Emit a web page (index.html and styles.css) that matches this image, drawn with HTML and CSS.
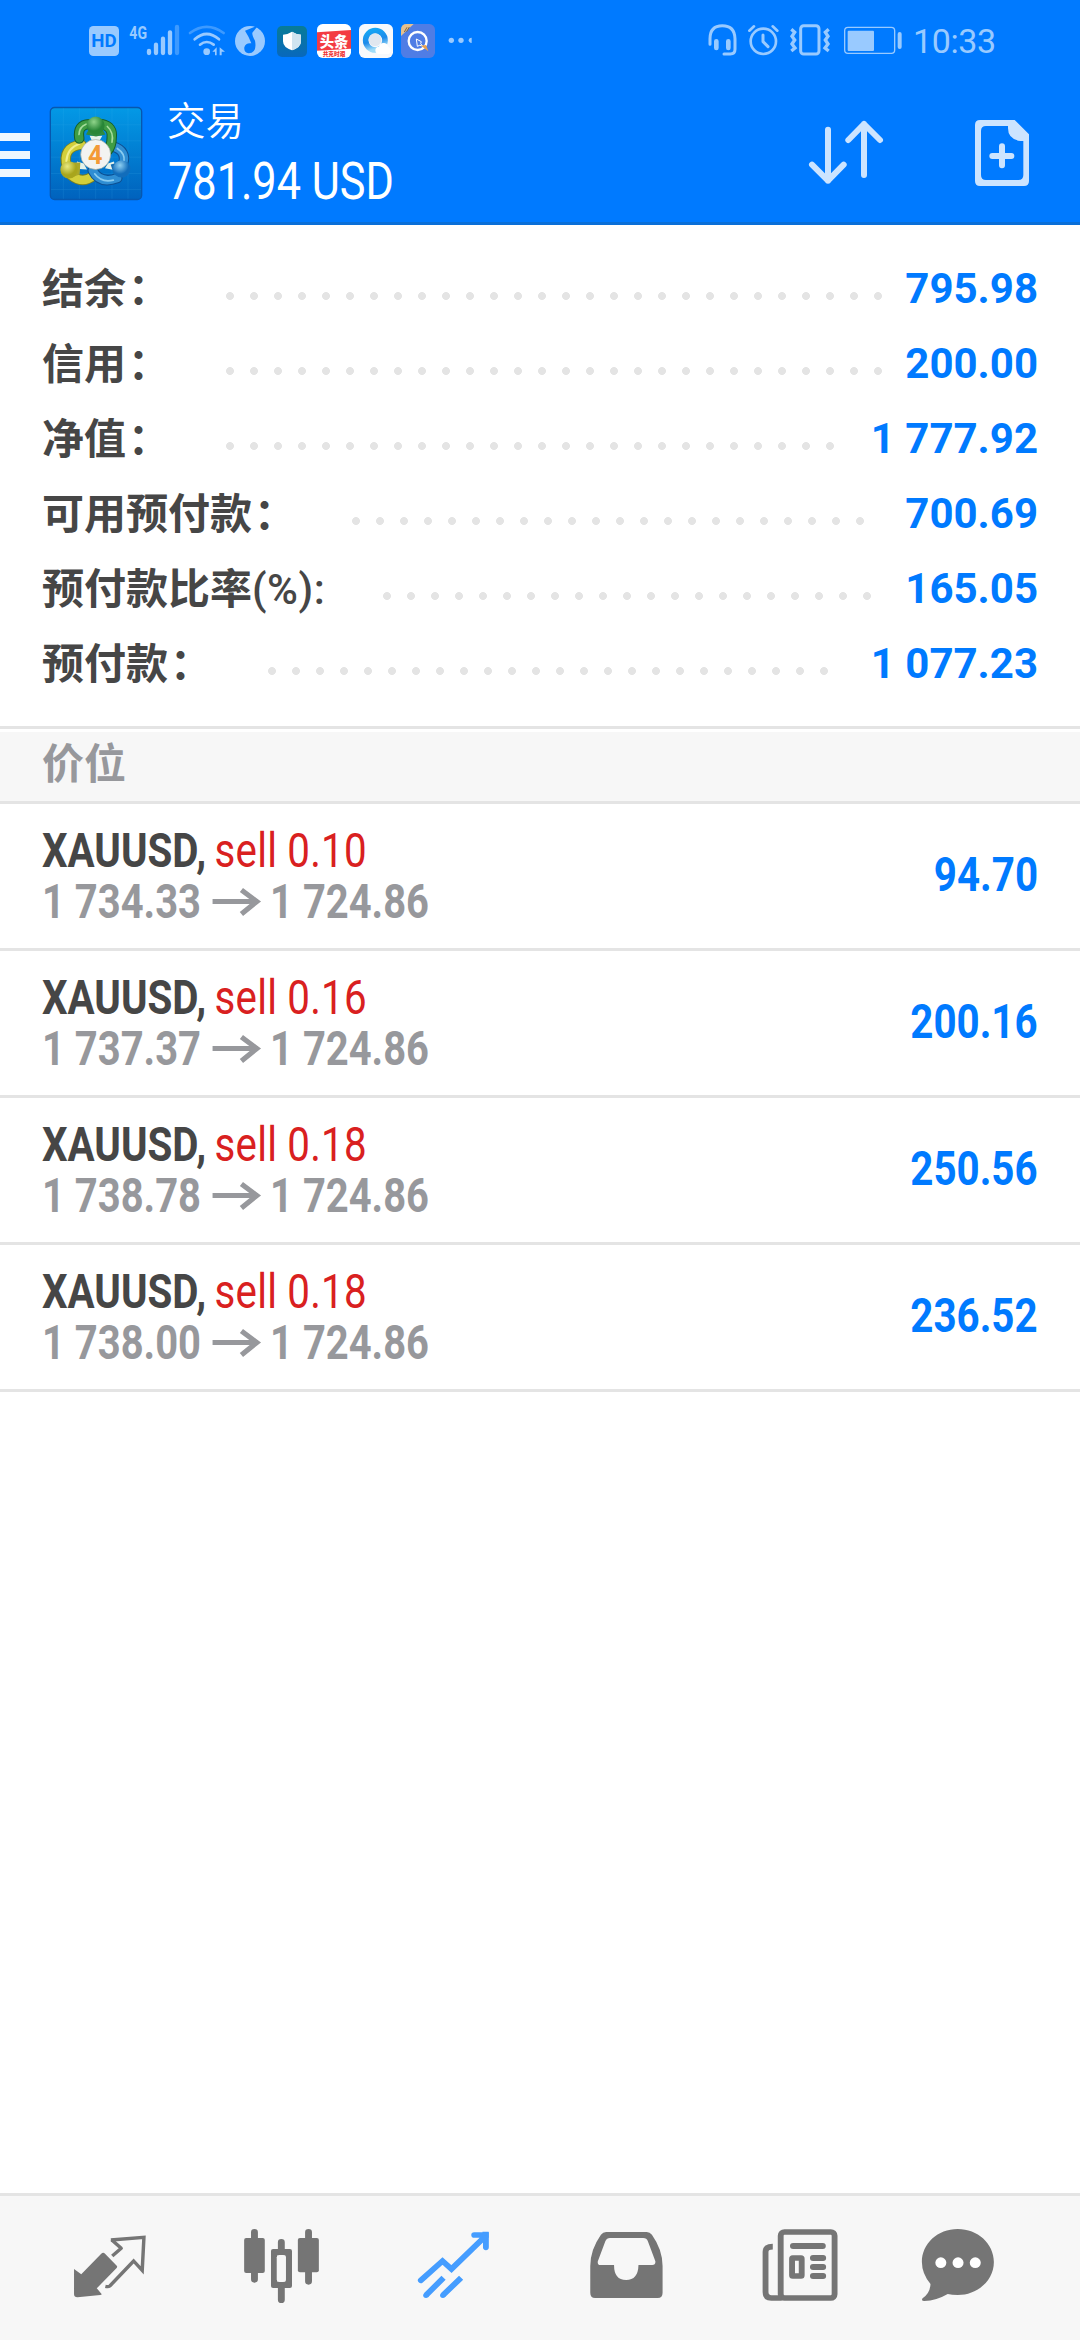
FILE: index.html
```html
<!DOCTYPE html>
<html lang="zh-CN">
<head>
<meta charset="utf-8">
<title>交易</title>
<link rel="stylesheet" href="styles.css">
</head>
<body>
<header class="header">
  <div class="status">
    <svg class="ic hd" viewBox="267 66 90 108"><rect x="267" y="78" width="90" height="90" rx="13" fill="#99caff"/><text x="312" y="142" text-anchor="middle" textLength="76" lengthAdjust="spacingAndGlyphs" class="hdtext">HD</text></svg>
    <svg class="ic signal" viewBox="387 66 150 108"><text x="388" y="116" textLength="53" lengthAdjust="spacingAndGlyphs" class="g4">4G</text><g stroke="#99caff" stroke-width="13" stroke-linecap="round"><path d="M447 153v6M468 134v25M489 116v43M510 97v62"/><path d="M531 81v78" opacity=".4"/></g></svg>
    <svg class="ic wifi" viewBox="564 66 114 108"><g fill="none" stroke="#99caff" stroke-width="8" stroke-linecap="round"><path d="M570 99Q620 62 671 99" opacity=".4"/><path d="M584 118Q620 86 657 118M600 134Q620 118 641 134"/></g><circle cx="620" cy="155" r="10" fill="#99caff"/><path d="M637 155l13-13v24h-5v-11zM659 166v-24l16 13h-10v11z" fill="#99caff"/></svg>
    <svg class="ic music" viewBox="705 66 90 108"><circle cx="750" cy="123" r="45" fill="#99caff"/><path d="M735 92L775 76Q762 92 757 98Q756 106 765 122Q772 158 746 160Q731 157 733 142Q737 128 754 130Q748 112 735 92Z" fill="#007aff"/></svg>
    <svg class="ic shield" viewBox="831 66 90 108"><defs><linearGradient id="sh" x2="0" y2="1"><stop stop-color="#087c96"/><stop offset="1" stop-color="#0868bd"/></linearGradient></defs><rect x="831" y="78" width="90" height="93" rx="15" fill="url(#sh)"/><path d="M876 95q14 9 27 9v20q0 18-27 27q-27-9-27-27v-20q13 0 27-9" fill="#fff"/><path d="M876 95q14 9 27 9v20q0 18-27 27z" fill="#cfe4f0"/></svg>
    <svg class="ic news1" viewBox="951 66 102 108"><rect x="951" y="72" width="102" height="102" rx="17" fill="#fff"/><path d="M951 97l102-7v56l-102 6z" fill="#f33b42"/><text x="1002" y="140" text-anchor="middle" class="tt">头条</text><text x="1002" y="167" text-anchor="middle" class="ts">共克时艰</text></svg>
    <svg class="ic qq" viewBox="1077 66 102 108"><defs><linearGradient id="qg" x2=".3" y2="1"><stop stop-color="#15a8f5"/><stop offset=".6" stop-color="#1d8bea"/><stop offset="1" stop-color="#9fdcf8"/></linearGradient></defs><rect x="1077" y="72" width="102" height="102" rx="17" fill="#f7f9fc"/><circle cx="1126" cy="121" r="29" fill="none" stroke="url(#qg)" stroke-width="17"/><circle cx="1125" cy="119" r="19" fill="#e1e7ef"/><path d="M1138 162q-12 0-12-11q0-10 11-11q3-13 16-11q10 2 12 12q8 2 7 11q-1 10-10 10z" fill="#fff"/></svg>
    <svg class="ic tool" viewBox="1203 66 102 108"><rect x="1203" y="72" width="102" height="102" rx="17" fill="#4f7de5"/><path d="M1203 108V89q0-17 17-17h21z" fill="#e6c18e"/><path d="M1213 96l8-14m-1 13l8-14" stroke="#80643f" stroke-width="3"/><circle cx="1253" cy="123" r="27" fill="none" stroke="#fff" stroke-width="7"/><path d="M1249 117l15 8-2 6 6 7-9-2-7 3z" fill="#4f7de5" stroke="#fff" stroke-width="3"/><path d="M1263 137l15-2 7 19z" fill="#eba34e"/></svg>
    <svg class="ic more" viewBox="1345 66 75 108"><g fill="#99caff"><circle cx="1355" cy="121" r="8"/><circle cx="1384" cy="121" r="8"/><path d="M1416 113v16q-9-1-9-8t9-8"/></g></svg>
    <svg class="ic phones" viewBox="84 66 87 108"><g fill="none" stroke="#99caff" stroke-width="9" stroke-linecap="round"><path d="M90 133V116Q90 77 127 77T165 116V148Q165 162 151 162H132"/></g><path d="M109 124v20M145 124v20" stroke="#99caff" stroke-width="14" stroke-linecap="round"/></svg>
    <svg class="ic alarm" viewBox="203 66 93 108"><g fill="none" stroke="#99caff" stroke-width="8" stroke-linecap="round" stroke-linejoin="round"><circle cx="249" cy="124" r="38"/><path d="M207 92l14-13M291 92l-14-13"/><path d="M248 105v20l15 15" stroke-width="9"/></g></svg>
    <svg class="ic vibrate" viewBox="329 66 120 108"><g fill="none" stroke="#99caff" stroke-width="9"><rect x="361" y="77" width="55" height="85" rx="9"/><path d="M333 88l10 9-8 12 8 11-8 12 9 12-11 9M445 88l-10 9 8 12-8 11 8 12-9 12 11 9" stroke-width="10"/></g></svg>
    <svg class="ic battery" viewBox="492 66 174 108"><rect x="494" y="82" width="150" height="78" rx="10" fill="none" stroke="#99caff" stroke-width="4"/><rect x="503" y="92" width="79" height="61" rx="3" fill="#99caff"/><rect x="653" y="96" width="12" height="51" rx="6" fill="#99caff"/></svg>
    <span class="time">10:33</span>
  </div>
  <div class="bar">
    <svg class="menu" viewBox="0 0 30 44"><path d="M0 4h30M0 22h30M0 40h30" stroke="#eef7ff" stroke-width="8"/></svg>
    <svg class="logo" viewBox="147 317 282 284">
      <defs>
        <linearGradient id="bg" x2="0" y2="1"><stop stop-color="#0399e6"/><stop offset="1" stop-color="#0062bd"/></linearGradient>
        <radialGradient id="gg" cx=".4" cy=".3"><stop stop-color="#8fd48a"/><stop offset="1" stop-color="#288637"/></radialGradient>
        <radialGradient id="yg" cx=".4" cy=".3"><stop stop-color="#e9ea80"/><stop offset="1" stop-color="#a8a51c"/></radialGradient>
        <radialGradient id="bl" cx=".4" cy=".3"><stop stop-color="#8fd0f2"/><stop offset="1" stop-color="#126dbb"/></radialGradient>
      </defs>
      <rect x="151" y="321" width="274" height="276" rx="13" fill="url(#bg)" stroke="#0757ae" stroke-width="4"/>
      <path d="M190 323v272M238 323v272M287 323v272M336 323v272M384 323v272M153 373h270M153 421h270M153 470h270M153 519h270M153 567h270" stroke="#4cbcf1" stroke-width="1.5" opacity=".25"/>
      <g fill="none" stroke-linecap="round">
        <path d="M201 500Q184 440 244 432M213 524Q248 552 280 526" stroke="#7c8120" stroke-width="31"/><path d="M201 500Q184 440 244 432M213 524Q248 552 280 526" stroke="#d3cf3b" stroke-width="25"/><path d="M199 482Q202 442 238 430" stroke="#f0ee8e" stroke-width="6"/>
        <path d="M278 510Q300 552 352 533M340 438Q382 452 369 490" stroke="#0d4f91" stroke-width="31"/><path d="M278 510Q300 552 352 533M340 438Q382 452 369 490" stroke="#2f8ed3" stroke-width="25"/><path d="M284 520Q305 548 340 539M352 444Q376 460 372 482" stroke="#8accf0" stroke-width="5"/>
        <path d="M238 414Q231 372 268 371M305 371Q340 378 335 413Q335 436 322 452" stroke="#155f2b" stroke-width="31"/><path d="M238 414Q231 372 268 371M305 371Q340 378 335 413Q335 436 322 452" stroke="#3f9d44" stroke-width="25"/><path d="M237 402Q238 378 258 371M322 378Q342 396 336 425" stroke="#a5dc9a" stroke-width="5"/>
      </g>
      <path d="M269 406h38l-10 18h-20zM231 483l20 6 10 18-34-2zM342 483l-18 6-9 14 32 6z" fill="#e4f2eb"/>
      <path d="M258 402l16-29h26l16 29-28 6z" fill="#2f8a3f"/><circle cx="287" cy="375" r="27" fill="url(#gg)"/>
      <path d="M214 486l27 0-2 36-34 12z" fill="#aaa728"/><circle cx="207" cy="508" r="26" fill="url(#yg)"/>
      <path d="M356 486l-24 6 10 31 30 8z" fill="#176db1"/><circle cx="365" cy="505" r="26" fill="url(#bl)"/>
      <circle cx="287" cy="462" r="45" fill="#f3f3f1" stroke="#9aa79d" stroke-width="2"/>
      <text x="286" y="489" text-anchor="middle" class="four">4</text>
    </svg>
    <div class="title"><div class="t1">交易</div><div class="t2">781.94 USD</div></div>
    <svg class="sort" viewBox="387 360 222 195"><g fill="none" stroke="#cce4ff" stroke-width="18" stroke-linecap="round" stroke-linejoin="round"><path d="M444 389v153M396 494l48 48 47-48M552 525V372M505 420l47-48 48 48"/></g></svg>
    <svg class="add" viewBox="885 357 165 204"><path fill-rule="evenodd" fill="#cce4ff" d="M900 360h104l43 43v140q0 15-15 15H900q-15 0-15-15V375q0-15 15-15zM918 378q-15 0-15 15v132q0 15 15 15h97q15 0 15-15V423h-8q-38-5-38-38v-7z"/><path d="M937 468h57M966 439v57" stroke="#cce4ff" stroke-width="18" stroke-linecap="round"/></svg>
  </div>
</header>

<section class="summary">
  <div class="row"><span class="label">结余<i class="colon">：</i></span><span class="dots" style="--n:28"></span><b class="value">795.98</b></div>
  <div class="row"><span class="label">信用<i class="colon">：</i></span><span class="dots" style="--n:28"></span><b class="value">200.00</b></div>
  <div class="row"><span class="label">净值<i class="colon">：</i></span><span class="dots" style="--n:26"></span><b class="value">1 777.92</b></div>
  <div class="row"><span class="label">可用预付款<i class="colon">：</i></span><span class="dots" style="--n:22"></span><b class="value">700.69</b></div>
  <div class="row"><span class="label">预付款比率<span class="latin">(%):</span></span><span class="dots" style="--n:21"></span><b class="value">165.05</b></div>
  <div class="row"><span class="label">预付款<i class="colon">：</i></span><span class="dots" style="--n:24"></span><b class="value">1 077.23</b></div>
</section>

<h2 class="section">价位</h2>

<main class="list">
  <div class="pos"><div class="info"><div class="name"><b>XAUUSD,</b> <span class="side">sell 0.10</span></div><div class="price"><span class="num">1 734.33</span><svg class="arrow" viewBox="0 0 46 26" preserveAspectRatio="none"><path d="M0 12.5H42M28 1L43 12.5L28 25" /></svg><span class="num">1 724.86</span></div></div><b class="profit">94.70</b></div>
  <div class="pos"><div class="info"><div class="name"><b>XAUUSD,</b> <span class="side">sell 0.16</span></div><div class="price"><span class="num">1 737.37</span><svg class="arrow" viewBox="0 0 46 26" preserveAspectRatio="none"><path d="M0 12.5H42M28 1L43 12.5L28 25" /></svg><span class="num">1 724.86</span></div></div><b class="profit">200.16</b></div>
  <div class="pos"><div class="info"><div class="name"><b>XAUUSD,</b> <span class="side">sell 0.18</span></div><div class="price"><span class="num">1 738.78</span><svg class="arrow" viewBox="0 0 46 26" preserveAspectRatio="none"><path d="M0 12.5H42M28 1L43 12.5L28 25" /></svg><span class="num">1 724.86</span></div></div><b class="profit">250.56</b></div>
  <div class="pos"><div class="info"><div class="name"><b>XAUUSD,</b> <span class="side">sell 0.18</span></div><div class="price"><span class="num">1 738.00</span><svg class="arrow" viewBox="0 0 46 26" preserveAspectRatio="none"><path d="M0 12.5H42M28 1L43 12.5L28 25" /></svg><span class="num">1 724.86</span></div></div><b class="profit">236.52</b></div>
</main>

<nav class="nav">
  <svg viewBox="209.1 132 220.7 252" preserveAspectRatio="none"><path fill="#757575" d="M215 267l21 16 58-62q6-5 11 0l34 36q3 4-1 8l-57 60 14 17q1 3-4 3l-66 7q-10 0-10-9z"/><path fill="none" stroke="#757575" stroke-width="10" stroke-linejoin="round" d="M326 228l26-23-28-26"/><path fill="none" stroke="#757575" stroke-width="10" d="M322 180l96-8-5 99-25-28-69 75q-4 3-13 1"/></svg>
  <svg viewBox="708.6 132 220.7 252" preserveAspectRatio="none"><g stroke="#757575" stroke-width="20" stroke-linecap="round"><path d="M739 157v141M896 157v147M817 187v35M817 310v49"/></g><g fill="#757575"><rect x="709" y="174" width="60" height="105" rx="6"/><rect x="865" y="174" width="61" height="103" rx="6"/><path fill-rule="evenodd" d="M793 207h49q6 0 6 6v105q0 6-6 6h-49q-6 0-6-6V213q0-6 6-6zM811 225q-7 0-7 7v67q0 7 7 7h12q7 0 7-7v-67q0-7-7-7z"/></g><rect x="804" y="225" width="26" height="81" rx="7" fill="#f7f7f7"/></svg>
  <svg viewBox="1208 132 220.7 252" preserveAspectRatio="none"><g fill="none" stroke="#459dff" stroke-width="17"><path stroke-linecap="round" d="M1222 301l63-58 26 24 96-96M1377 165h34v37"/><path d="M1404 158h12v12h-12z" stroke-width="6" fill="#459dff"/><path d="M1237 346l51-53M1286 346l53-53"/></g><circle cx="1237" cy="346" r="8" fill="#459dff"/><circle cx="1286" cy="346" r="8" fill="#459dff"/></svg>
  <svg viewBox="139.4 132 220.7 252" preserveAspectRatio="none"><path fill="#757575" fill-rule="evenodd" d="M192 156h118q9 0 15 8 31 45 31 94v80q0 16-14 16H160q-14 0-14-16v-80q0-49 31-94 6-8 15-8zM203 174q-9 0-13 9l-22 61q-2 11 8 11h39q0 45 35 45t36-45h40q10 0 9-11l-22-61q-3-9-13-9z"/></svg>
  <svg viewBox="638.9 132 220.7 252" preserveAspectRatio="none"><g fill="none" stroke="#757575" stroke-width="17"><rect x="699" y="156" width="156.500" height="198" rx="11"/><path d="M676 200q-21 0-21 15v121q0 18 17 18h30"/></g><path d="M735 198h86M793 234h29M793 261h29M793 288h29" stroke="#757575" stroke-width="18" stroke-linecap="round"/><rect x="732" y="234" width="28" height="54" rx="2" fill="none" stroke="#757575" stroke-width="17"/></svg>
  <svg class="chat" viewBox="1103.5 132 220.7 252" preserveAspectRatio="none"><path fill="#757575" d="M1213 147c58 0 105 44 105 99s-47 99-105 99q-17 0-29-3-33 20-68 21-10-1-5-8 22-16 23-43-25-31-25-66c0-55 46-99 104-99z"/><g fill="#fff"><circle cx="1164" cy="248" r="16"/><circle cx="1214" cy="248" r="16"/><circle cx="1264" cy="248" r="16"/></g></svg>
</nav>
</body>
</html>
```

FILE: styles.css
```css
* { box-sizing: border-box; }
body {
  margin: 0;
  height: 2340px;
  display: flex;
  flex-direction: column;
  background: #fff;
  font-family: Roboto, "Noto Sans CJK SC", sans-serif;
  color: #464646;
}
svg { display: block; overflow: visible; flex: none; }

/* Header */
.header { height: 225px; background: #007aff; border-bottom: 3px solid #0a6fd8; }
.status { height: 80px; padding-top: 22px; display: flex; align-items: flex-start; }
.ic { height: 36px; }
.hd { width: 30px; margin-left: 89px; }
.signal { width: 50px; margin-left: 10px; }
.wifi { width: 38px; margin-left: 9px; }
.music { width: 30px; margin-left: 9px; }
.shield { width: 30px; margin-left: 12px; }
.news1 { width: 34px; margin-left: 10px; }
.qq { width: 34px; margin-left: 8px; }
.tool { width: 34px; margin-left: 8px; }
.more { width: 25px; margin-left: 13px; }
.phones { width: 29px; margin-left: 235px; }
.alarm { width: 31px; margin-left: 11px; }
.vibrate { width: 40px; margin-left: 11px; }
.battery { width: 58px; margin-left: 14px; }
.time { margin-left: 11px; font-size: 34px; line-height: 38px; color: #99caff; letter-spacing: -.4px; }
.hdtext { font: 700 54px Roboto, sans-serif; fill: #007aff; }
.g4 { font: 700 56px Roboto, sans-serif; fill: #99caff; }
.tt { font: 900 43px "Noto Sans CJK SC", sans-serif; fill: #fff; }
.ts { font: 900 17px "Noto Sans CJK SC", sans-serif; fill: #e33; }
.four { font: 700 76px Roboto, sans-serif; fill: #f39a37; }

.bar { height: 142px; display: flex; align-items: flex-start; }
.menu { width: 30px; height: 44px; margin-top: 53px; }
.logo { width: 94px; height: 95px; margin: 26px 0 0 19px; }
.title { width: 640px; margin-left: 25px; padding-top: 15px; color: #fff; }
.t1 { font-size: 38.5px; line-height: 54px; font-weight: 350; margin-left: -1px; }
.t2 { font-size: 51.5px; line-height: 60px; transform: scaleX(.84); transform-origin: left; white-space: nowrap; margin-top: 3px; }
.sort { width: 74px; height: 65px; margin: 40px 0 0 1px; }
.add { width: 55px; height: 68px; margin: 39px 0 0 92px; }

/* Account summary */
.summary { height: 501px; padding: 25px 42px 0; }
.row { height: 75px; display: flex; align-items: center; font-size: 42px; line-height: 71px; }
.label { padding-bottom: 4px; font-family: "Noto Sans CJK SC", sans-serif; font-weight: 700; white-space: nowrap; }
.colon { font-style: normal; display: inline-block; line-height: 1; transform: translateX(2px); }
.latin { font-family: Roboto, sans-serif; font-weight: 500; line-height: 0; letter-spacing: .5px; }
.dots {
  width: calc(var(--n) * 24px);
  height: 8px;
  margin: 16px 0 0 58px;
  background: radial-gradient(circle at 4px 4px, #e4e4e4 3.6px, transparent 4.3px) 0 0 / 24px 8px repeat-x;
}
.value { margin-left: auto; padding-top: 2px; color: #007aff; font-weight: 700; }

.section {
  margin: 0;
  height: 78px;
  padding: 0 42px;
  border-top: 3px solid #e4e4e4;
  border-bottom: 3px solid #e4e4e4;
  box-shadow: inset 0 3px #fff;
  background: #f7f7f7;
  color: #97989c;
  font: 700 42px/63px "Noto Sans CJK SC", sans-serif;
}

/* Open positions */
.list { flex: 1; }
.pos { height: 147px; padding: 0 42px; border-bottom: 3px solid #e4e4e4; display: flex; justify-content: space-between; align-items: center; font-size: 48px; }
.info { width: 500px; }
.name, .price { height: 51px; line-height: 51px; white-space: nowrap; transform: scaleX(.84); transform-origin: left; }
.name b { margin-right: -2px; }
.side { color: #d92020; letter-spacing: .25px; }
.price { display: flex; align-items: center; color: #97989c; font-weight: 700; transform: scaleX(.832); }
.arrow { width: 57px; height: 26px; margin: 0 12px 0 14px; fill: none; stroke: #97989c; stroke-width: 5px; }
.profit { margin-top: -3px; color: #007aff; transform: scaleX(.84); transform-origin: right; }

.nav { height: 147px; padding: 28px 0 0 72px; border-top: 3px solid #e4e4e4; background: #f7f7f7; display: flex; gap: 96px; }
.nav svg { width: 76px; height: 84px; }
.nav .chat { margin-left: -12px; }
```
